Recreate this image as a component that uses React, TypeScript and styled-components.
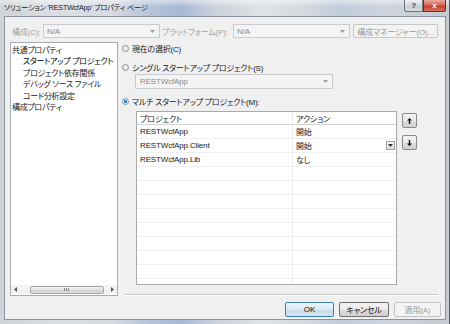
import React from 'react';
import styled, { createGlobalStyle } from 'styled-components';

const GlobalStyle = createGlobalStyle`
  body {
    margin: 0;
    font-family: "Liberation Sans", "Noto Sans CJK JP", sans-serif;
    font-size: 8px;
    font-feature-settings: "palt";
    letter-spacing: -0.15px;
    color: #1a1a1a;
  }
`;

const treeItems = [
  { label: '共通プロパティ', child: false },
  { label: 'スタートアップ プロジェクト', child: true, selected: true },
  { label: 'プロジェクト依存関係', child: true },
  { label: 'デバッグ ソース ファイル', child: true },
  { label: 'コード分析設定', child: true },
  { label: '構成プロパティ', child: false },
];

const projects = [
  { name: 'RESTWcfApp', action: '開始' },
  { name: 'RESTWcfApp.Client', action: '開始', dropdown: true },
  { name: 'RESTWcfApp.Lib', action: 'なし' },
];

const DownArrow = ({ color = '#a0a0a0' }: { color?: string }) => (
  <svg width="5" height="3" viewBox="0 0 5 3">
    <path d="M0 0h5L2.5 3z" fill={color} />
  </svg>
);

const MoveArrow = ({ up }: { up?: boolean }) => (
  <svg width="5" height="6" viewBox="0 0 5 6">
    {up ? <path d="M2.5 0L5 2.6H3.2V6H1.8V2.6H0z" fill="#111" /> : <path d="M2.5 6L5 3.4H3.2V0H1.8V3.4H0z" fill="#111" />}
  </svg>
);

const App = () => {
  return (
    <>
      <GlobalStyle />
      <Window>
        <TitleBar>
          <Title>ソリューション 'RESTWcfApp' プロパティ ページ</Title>
          <CaptionButtons>
            <CaptionButton>?</CaptionButton>
            <CaptionButton $close>x</CaptionButton>
          </CaptionButtons>
        </TitleBar>
        <Client>
          <TopRow>
            <FieldLabel $width={31}>構成(C):</FieldLabel>
            <Combo $width={117}>
              N/A
              <DownArrow />
            </Combo>
            <FieldLabel $width={71}>プラットフォーム(P):</FieldLabel>
            <Combo $width={117}>
              N/A
              <DownArrow />
            </Combo>
            <ManagerButton>構成マネージャー(O)...</ManagerButton>
          </TopRow>
          <Body>
            <Tree>
              <TreeList>
                {treeItems.map((item) => (
                  <TreeItem key={item.label} $child={item.child} $selected={item.selected}>
                    {item.label}
                  </TreeItem>
                ))}
              </TreeList>
              <HScroll>
                <ScrollArrow>
                  <svg width="3" height="5" viewBox="0 0 3 5">
                    <path d="M3 0v5L0 2.5z" fill="#555" />
                  </svg>
                </ScrollArrow>
                <ScrollTrack>
                  <Thumb>
                    <svg width="5" height="3" viewBox="0 0 5 3">
                      <path d="M0.5 0v3M2.5 0v3M4.5 0v3" stroke="#888" strokeWidth="1" />
                    </svg>
                  </Thumb>
                </ScrollTrack>
                <ScrollArrow>
                  <svg width="3" height="5" viewBox="0 0 3 5">
                    <path d="M0 0v5L3 2.5z" fill="#555" />
                  </svg>
                </ScrollArrow>
              </HScroll>
            </Tree>
            <RightColumn>
              <RadioRow $top={0}>
                <Radio />
                現在の選択(C)
              </RadioRow>
              <RadioRow $top={7}>
                <Radio />
                シングル スタートアップ プロジェクト(S)
              </RadioRow>
              <SingleCombo>
                RESTWcfApp
                <DownArrow />
              </SingleCombo>
              <RadioRow $top={6}>
                <Radio $checked />
                マルチ スタートアップ プロジェクト(M):
              </RadioRow>
              <GridArea>
                <Grid>
                  <HeaderRow>
                    <NameCell>プロジェクト</NameCell>
                    <ActionCell>アクション</ActionCell>
                  </HeaderRow>
                  {projects.map((p) => (
                    <GridRow key={p.name}>
                      <NameCell>{p.name}</NameCell>
                      <ActionCell>
                        {p.action}
                        {p.dropdown && (
                          <CellDrop>
                            <DownArrow color="#333" />
                          </CellDrop>
                        )}
                      </ActionCell>
                    </GridRow>
                  ))}
                  {Array.from({ length: 9 }).map((_, i) => (
                    <GridRow key={i}>
                      <NameCell />
                      <ActionCell />
                    </GridRow>
                  ))}
                </Grid>
                <MoveButtons>
                  <MoveButton>
                    <MoveArrow up />
                  </MoveButton>
                  <MoveButton>
                    <MoveArrow />
                  </MoveButton>
                </MoveButtons>
              </GridArea>
              <Separator />
            </RightColumn>
          </Body>
          <ButtonRow>
            <DialogButton $variant="default" $width={49}>
              OK
            </DialogButton>
            <DialogButton $width={50}>キャンセル</DialogButton>
            <DialogButton $variant="disabled" $width={47}>
              適用(A)
            </DialogButton>
          </ButtonRow>
        </Client>
      </Window>
    </>
  );
};

const Window = styled.div`
  width: 450px;
  height: 324px;
  display: flex;
  flex-direction: column;
  overflow: hidden;
  background:
    linear-gradient(180deg, rgba(255, 255, 255, 0.5) 0px, rgba(255, 255, 255, 0) 7px),
    linear-gradient(
      90deg,
      #cfd3d8 0%,
      #dadee3 12%,
      #d6dbe2 25%,
      #b9c6da 32%,
      #a7b8d6 40%,
      #cbd2dc 48%,
      #dfe2e6 58%,
      #d4d9df 68%,
      #c0cbdb 76%,
      #cdd4dd 86%,
      #c5cad0 100%
    );
  border-right: 1px solid #5a5f66;
  box-sizing: border-box;
`;

const TitleBar = styled.div`
  height: 16px;
  display: flex;
  justify-content: space-between;
  align-items: flex-start;
  padding-left: 4px;
`;

const Title = styled.span`
  line-height: 15px;
  font-size: 7.2px;
  letter-spacing: -0.2px;
  color: #111;
  text-shadow: 0 0 3px rgba(255, 255, 255, 0.9);
`;

const CaptionButtons = styled.div`
  display: flex;
  margin-right: 3px;
`;

const CaptionButton = styled.div<{ $close?: boolean }>`
  width: ${(p) => (p.$close ? '23px' : '19px')};
  height: 12px;
  box-sizing: border-box;
  display: flex;
  align-items: center;
  justify-content: center;
  font-size: 8px;
  font-weight: bold;
  color: ${(p) => (p.$close ? '#fff' : '#444')};
  border: 1px solid ${(p) => (p.$close ? '#7a2a20' : '#6d7480')};
  border-top: none;
  border-radius: ${(p) => (p.$close ? '0 0 3px 0' : '0 0 0 3px')};
  background: ${(p) =>
    p.$close
      ? 'linear-gradient(180deg, #e9a99a 0%, #d7695a 45%, #c2402e 55%, #d9735c 100%)'
      : 'linear-gradient(180deg, #eef0f3 0%, #d9dde3 45%, #c5cbd3 55%, #d8dce2 100%)'};
`;

const Client = styled.div`
  flex: 1;
  margin: 0 3px 4px 4px;
  background: #f0f0f0;
  border: 1px solid #8c939c;
  padding: 7px 4px 2px 5px;
  display: flex;
  flex-direction: column;
  min-height: 0;
`;

const TopRow = styled.div`
  display: flex;
  align-items: center;
  height: 14px;
`;

const FieldLabel = styled.span<{ $width: number }>`
  width: ${(p) => p.$width}px;
  padding-left: 2px;
  color: #a3a3a3;
  white-space: nowrap;
`;

const Combo = styled.div<{ $width: number }>`
  width: ${(p) => p.$width}px;
  height: 14px;
  box-sizing: border-box;
  border: 1px solid #c9cdd1;
  background: #f4f4f4;
  color: #8a8a8a;
  display: flex;
  align-items: center;
  justify-content: space-between;
  padding: 0 4px 0 3px;
`;

const ManagerButton = styled.div`
  margin-left: 3px;
  width: 85px;
  height: 14px;
  box-sizing: border-box;
  border: 1px solid #c4c7ca;
  border-radius: 2px;
  background: #f4f4f4;
  color: #9a9a9a;
  display: flex;
  align-items: center;
  justify-content: center;
  white-space: nowrap;
`;

const Body = styled.div`
  display: flex;
  margin-top: 4px;
  height: 254px;
`;

const Tree = styled.div`
  width: 108px;
  box-sizing: border-box;
  border: 1px solid #a5acb5;
  background: #fff;
  display: flex;
  flex-direction: column;
`;

const TreeList = styled.div`
  flex: 1;
  padding-top: 2px;
  overflow: hidden;
`;

const TreeItem = styled.div<{ $child?: boolean; $selected?: boolean }>`
  height: 11.4px;
  line-height: 11.4px;
  padding-left: ${(p) => (p.$child ? '12px' : '1px')};
  letter-spacing: -0.3px;
  white-space: nowrap;
  color: ${(p) => (p.$selected ? '#000' : '#222')};
`;

const HScroll = styled.div`
  height: 9px;
  margin: 0 0 1px;
  display: flex;
  align-items: center;
  background: #f3f3f3;
`;

const ScrollArrow = styled.div`
  width: 11px;
  display: flex;
  justify-content: center;
`;

const ScrollTrack = styled.div`
  flex: 1;
  height: 100%;
  padding: 0 4px 0 9px;
  display: flex;
  align-items: center;
`;

const Thumb = styled.div`
  width: 74px;
  height: 8px;
  box-sizing: border-box;
  border: 1px solid #a7a7a7;
  border-radius: 2px;
  background: linear-gradient(180deg, #f3f3f3 0%, #e2e2e2 50%, #d3d3d3 51%, #dcdcdc 100%);
  display: flex;
  align-items: center;
  justify-content: center;
`;

const RightColumn = styled.div`
  flex: 1;
  margin-left: 4px;
  display: flex;
  flex-direction: column;
`;

const RadioRow = styled.div<{ $top: number }>`
  margin-top: ${(p) => p.$top}px;
  height: 12px;
  display: flex;
  align-items: center;
  gap: 3px;
  letter-spacing: -0.25px;
  white-space: nowrap;
`;

const Radio = styled.span<{ $checked?: boolean }>`
  width: 7px;
  height: 7px;
  box-sizing: border-box;
  border-radius: 50%;
  border: 1px solid #8f959c;
  background: ${(p) =>
    p.$checked
      ? 'radial-gradient(circle, #2e6fb8 0%, #4a93d8 40%, #dfe8f1 55%, #f4f4f4 100%)'
      : 'radial-gradient(circle, #f6f6f6 0%, #dcdcdc 100%)'};
`;

const SingleCombo = styled.div`
  margin: 1px 0 0 13px;
  width: 198px;
  height: 15px;
  box-sizing: border-box;
  border: 1px solid #c9cdd1;
  background: #f4f4f4;
  color: #8a8a8a;
  display: flex;
  align-items: center;
  justify-content: space-between;
  padding: 0 4px 0 4px;
`;

const GridArea = styled.div`
  margin: 4px 0 0 14px;
  display: flex;
  align-items: flex-start;
  gap: 5px;
`;

const Grid = styled.div`
  width: 261px;
  height: 174px;
  box-sizing: border-box;
  border: 1px solid #a9a9a9;
  background: #fff;
  overflow: hidden;
`;

const GridRow = styled.div`
  display: flex;
  height: 14px;
  box-sizing: border-box;
  border-bottom: 1px solid #f0f0f0;
`;

const HeaderRow = styled(GridRow)`
  height: 13px;
  border-bottom: 1px solid #d5d5d5;
`;

const NameCell = styled.div`
  width: 156px;
  box-sizing: border-box;
  padding-left: 3px;
  border-right: 1px solid #ececec;
  display: flex;
  align-items: center;
  white-space: nowrap;
`;

const ActionCell = styled.div`
  flex: 1;
  padding: 0 1px 0 3px;
  display: flex;
  align-items: center;
  justify-content: space-between;
`;

const CellDrop = styled.div`
  width: 9px;
  height: 9px;
  box-sizing: border-box;
  border: 1px solid #a0a0a0;
  background: linear-gradient(180deg, #f6f6f6, #dedede);
  display: flex;
  align-items: center;
  justify-content: center;
`;

const MoveButtons = styled.div`
  display: flex;
  flex-direction: column;
  gap: 7px;
  padding-top: 2px;
`;

const MoveButton = styled.div`
  width: 15px;
  height: 15px;
  box-sizing: border-box;
  border: 1px solid #8a8a8a;
  border-radius: 2px;
  background: linear-gradient(180deg, #f4f4f4 0%, #e9e9e9 50%, #dcdcdc 51%, #d0d0d0 100%);
  display: flex;
  align-items: center;
  justify-content: center;
`;

const Separator = styled.div`
  margin: auto 3px 0 3px;
  height: 0;
  border-top: 1px solid #c8c8c8;
  border-bottom: 1px solid #fff;
`;

const ButtonRow = styled.div`
  display: flex;
  justify-content: flex-end;
  gap: 5px;
  margin-top: 6px;
`;

const DialogButton = styled.div<{ $variant?: 'default' | 'disabled'; $width: number }>`
  width: ${(p) => p.$width}px;
  height: 15px;
  box-sizing: border-box;
  border-radius: 2px;
  display: flex;
  align-items: center;
  justify-content: center;
  white-space: nowrap;
  border: 1px solid
    ${(p) => (p.$variant === 'default' ? '#3c7fb1' : p.$variant === 'disabled' ? '#c0c4c8' : '#707070')};
  color: ${(p) => (p.$variant === 'disabled' ? '#9a9a9a' : '#111')};
  background: ${(p) =>
    p.$variant === 'default'
      ? 'linear-gradient(180deg, #eef5fa 0%, #dbe9f3 50%, #c6dbe9 51%, #d3e5f1 100%)'
      : p.$variant === 'disabled'
        ? '#f4f4f4'
        : 'linear-gradient(180deg, #f2f2f2 0%, #ebebeb 50%, #dddddd 51%, #cfcfcf 100%)'};
`;

export default App;
